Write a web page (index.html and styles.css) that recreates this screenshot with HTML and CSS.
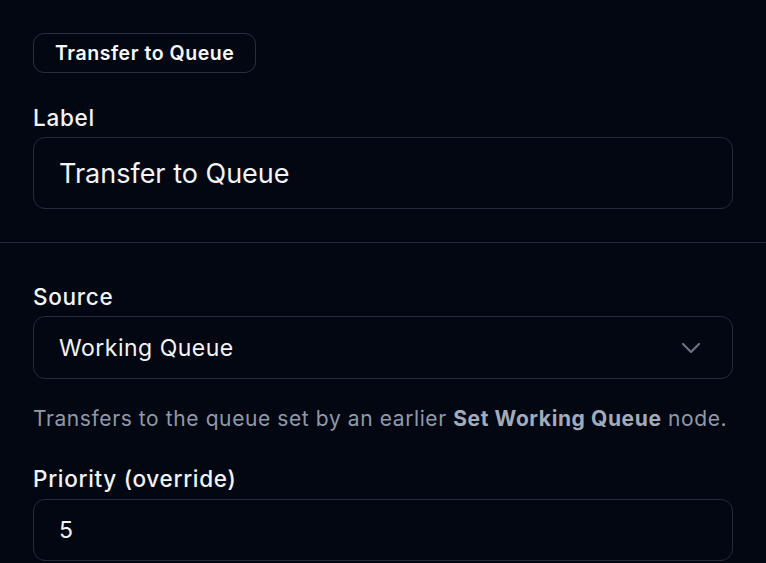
FILE: index.html
```html
<!DOCTYPE html>
<html lang="en">
<head>
<meta charset="utf-8">
<title>Transfer to Queue</title>
<link rel="stylesheet" href="styles.css">
</head>
<body>
<div class="panel">
  <section class="section section-top">
    <span class="badge">Transfer to Queue</span>
    <label class="field-label label-first">Label</label>
    <div class="input input-large">Transfer to Queue</div>
  </section>
  <section class="section section-body">
    <label class="field-label">Source</label>
    <div class="input select">
      <span>Working Queue</span>
      <svg class="chevron" width="20" height="12" viewBox="0 0 20 12" fill="none">
        <path d="M2 2 L10 10 L18 2" stroke="#6b7280" stroke-width="2.2" stroke-linecap="round" stroke-linejoin="round"/>
      </svg>
    </div>
    <p class="help">Transfers to the queue set by an earlier <strong>Set Working Queue</strong> node.</p>
    <label class="field-label label-priority">Priority (override)</label>
    <div class="input input-num">5</div>
  </section>
</div>
</body>
</html>
```
FILE: styles.css
```css
html, body {
  margin: 0;
  padding: 0;
  background: #030712;
  color: #f3f4f6;
  font-family: Inter, "Noto Sans", "Liberation Sans", sans-serif;
  overflow: hidden;
}
.panel {
  width: 766px;
}
.section {
  display: flex;
  flex-direction: column;
  align-items: flex-start;
  padding: 33px 33px;
}
.section-top {
  border-bottom: 1px solid #1f2937;
  padding-bottom: 33px;
}
.section-body {
  padding-top: 39px;
}
.badge {
  box-sizing: border-box;
  height: 40px;
  display: inline-flex;
  align-items: center;
  padding: 0 21px;
  border: 1.5px solid #263041;
  border-radius: 11px;
  font-size: 19.5px;
  letter-spacing: 0.55px;
  font-weight: 600;
  color: #f9fafb;
}
.field-label {
  display: block;
  font-size: 22.5px;
  letter-spacing: 0.7px;
  line-height: 30px;
  font-weight: 500;
  color: #f3f4f6;
  margin-bottom: 4px;
}
.label-first {
  margin-top: 30px;
}
.label-priority {
  margin-top: 31px;
  margin-bottom: 5px;
}
.input {
  box-sizing: border-box;
  width: 700px;
  display: flex;
  align-items: center;
  padding: 0 25px;
  border: 1.5px solid #232c3b;
  border-radius: 12px;
  background: #030712;
  color: #f3f4f6;
}
.input-large {
  height: 72px;
  font-size: 27px;
}
.select {
  height: 63px;
  font-size: 23px;
  letter-spacing: 0.5px;
  justify-content: space-between;
  padding-right: 31px;
}
.chevron {
  display: block;
}
.input-num {
  height: 62px;
  font-size: 23px;
}
.help {
  margin: 26px 0 0;
  font-size: 21px;
  letter-spacing: 0.6px;
  line-height: 28px;
  color: #8f99a9;
  white-space: nowrap;
}
.help strong {
  font-weight: 700;
  color: #a1abba;
}
```
